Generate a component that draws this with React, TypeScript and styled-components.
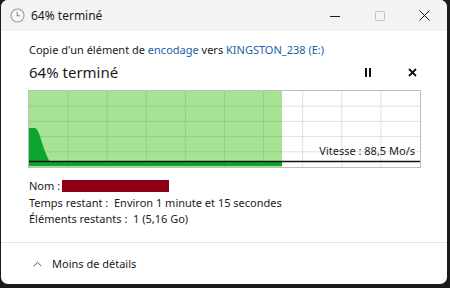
import React from "react";
import styled, { createGlobalStyle } from "styled-components";

const Global = createGlobalStyle`
  html, body { margin: 0; padding: 0; background: #1b1b1b; }
  body { width: 450px; height: 288px; overflow: hidden; font-family: "Segoe UI", "Noto Sans", "Open Sans", sans-serif; color: #000; }
`;

const Desktop = styled.div`
  width: 450px;
  height: 288px;
  background: #1b1b1b;
  display: flex;
  align-items: flex-start;
  padding-left: 1px;
  box-sizing: border-box;
`;

const Window = styled.div`
  width: 446px;
  height: 284px;
  background: #ffffff;
  border-radius: 7px;
  overflow: hidden;
  display: flex;
  flex-direction: column;
`;

const TitleBar = styled.div`
  height: 31px;
  background: #f3f3f3;
  display: flex;
  align-items: center;
  padding-left: 9px;
  flex-shrink: 0;
`;

const TitleText = styled.span`
  font-size: 12px;
  margin-left: 6px;
  flex: 1;
  color: #1a1a1a;
`;

const CaptionButton = styled.div<{ $disabled?: boolean }>`
  width: 45px;
  height: 31px;
  display: flex;
  align-items: center;
  justify-content: center;
  color: ${(p) => (p.$disabled ? "#c4c4c4" : "#1a1a1a")};
`;

const Body = styled.div`
  flex: 1;
  padding: 11px 23px 0 27px;
  display: flex;
  flex-direction: column;
`;

const Subtitle = styled.div`
  font-size: 11px;
  line-height: 16px;
  color: #1a1a1a;
  padding-left: 1px;
`;

const Link = styled.span`
  color: #1d5ea8;
`;

const HeadRow = styled.div`
  display: flex;
  align-items: center;
  height: 22px;
  margin-top: 3px;
  padding-left: 1px;
`;

const Heading = styled.div`
  font-size: 15px;
  flex: 1;
  color: #1a1a1a;
`;

const IconBtn = styled.div`
  width: 24px;
  height: 22px;
  display: flex;
  align-items: center;
  justify-content: center;
  margin-left: 20px;
`;

const Chart = styled.div`
  position: relative;
  margin-top: 7px;
  width: 391px;
  height: 76px;
  border: 1px solid #bdbdbd;
`;

const Speed = styled.div`
  position: absolute;
  right: 5px;
  bottom: 9px;
  font-size: 11px;
  line-height: 14px;
  color: #1a1a1a;
`;

const Details = styled.div`
  margin-top: 10px;
  padding-left: 1px;
  display: flex;
  flex-direction: column;
  font-size: 11px;
  line-height: 16.5px;
  color: #1a1a1a;
`;

const Line = styled.div`
  display: flex;
  align-items: center;
  white-space: pre;
`;

const Redacted = styled.span`
  display: inline-block;
  width: 107px;
  height: 12px;
  background: #8b0014;
  margin-left: 2px;
`;

const Footer = styled.div`
  height: 41px;
  border-top: 1px solid #e3e3e3;
  display: flex;
  align-items: center;
  padding-left: 32px;
  margin-top: auto;
  font-size: 11px;
  color: #1a1a1a;
  gap: 10px;
`;

const W = 391;
const H = 76;
const GREEN_W = 253;

function ChartDrawing() {
  const vs = Array.from({ length: 9 }, (_, i) => (i + 1) * (W / 10));
  const hs = Array.from({ length: 4 }, (_, i) => (i + 1) * (H / 5));
  return (
    <svg width={W} height={H} style={{ display: "block" }}>
      <rect x={0} y={0} width={W} height={H} fill="#fff" />
      {vs.map((x) => (
        <line key={"v" + x} x1={x} x2={x} y1={0} y2={H} stroke="#d9e6d9" strokeWidth={1} />
      ))}
      {hs.map((y) => (
        <line key={"h" + y} x1={0} x2={W} y1={y} y2={y} stroke="#d9e6d9" strokeWidth={1} />
      ))}
      <rect x={0} y={0} width={GREEN_W} height={H} fill="#a6e394" />
      {vs.filter((x) => x < GREEN_W).map((x) => (
        <line key={"gv" + x} x1={x} x2={x} y1={0} y2={H} stroke="#8fd27d" strokeWidth={1} />
      ))}
      {hs.map((y) => (
        <line key={"gh" + y} x1={0} x2={GREEN_W} y1={y} y2={y} stroke="#8fd27d" strokeWidth={1} />
      ))}
      <path d="M0,71 L0,37 L6,37 C11,38 13,58 21,71 Z" fill="#0ea52e" />
      <rect x={0} y={70} width={GREEN_W} height={5} fill="#0ea52e" />
      <line x1={0} x2={W} y1={70.5} y2={70.5} stroke="#111" strokeWidth={1.3} />
    </svg>
  );
}

export default function App() {
  return (
    <>
      <Global />
      <Desktop>
        <Window>
          <TitleBar>
            <svg width="15" height="15" viewBox="0 0 15 15">
              <circle cx="7.5" cy="7.5" r="6.5" fill="#f7f7f7" stroke="#9a9a9a" strokeWidth="1.1" />
              <path d="M7.2 3.8 V7.8 H10" fill="none" stroke="#8a8a8a" strokeWidth="1.1" />
            </svg>
            <TitleText>64% terminé</TitleText>
            <CaptionButton>
              <svg width="10" height="10" viewBox="0 0 10 10">
                <line x1="0" x2="10" y1="5.5" y2="5.5" stroke="currentColor" strokeWidth="1" />
              </svg>
            </CaptionButton>
            <CaptionButton $disabled>
              <svg width="10" height="10" viewBox="0 0 10 10">
                <rect x="0.5" y="0.5" width="9" height="9" rx="1" fill="none" stroke="currentColor" strokeWidth="1" />
              </svg>
            </CaptionButton>
            <CaptionButton>
              <svg width="11" height="11" viewBox="0 0 11 11">
                <path d="M0.5 0.5 L10.5 10.5 M10.5 0.5 L0.5 10.5" stroke="currentColor" strokeWidth="1" />
              </svg>
            </CaptionButton>
          </TitleBar>
          <Body>
            <Subtitle>
              Copie d'un élément de <Link>encodage</Link> vers <Link>KINGSTON_238 (E:)</Link>
            </Subtitle>
            <HeadRow>
              <Heading>64% terminé</Heading>
              <IconBtn>
                <svg width="8" height="9" viewBox="0 0 8 9">
                  <rect x="1" y="0" width="2" height="9" fill="#111" />
                  <rect x="5" y="0" width="2" height="9" fill="#111" />
                </svg>
              </IconBtn>
              <IconBtn>
                <svg width="9" height="9" viewBox="0 0 9 9">
                  <path d="M1 1 L8 8 M8 1 L1 8" stroke="#111" strokeWidth="1.8" />
                </svg>
              </IconBtn>
            </HeadRow>
            <Chart>
              <ChartDrawing />
              <Speed>Vitesse : 88,5 Mo/s</Speed>
            </Chart>
            <Details>
              <Line>
                Nom :<Redacted />
              </Line>
              <Line>Temps restant :  Environ 1 minute et 15 secondes</Line>
              <Line>Éléments restants :  1 (5,16 Go)</Line>
            </Details>
          </Body>
          <Footer>
            <svg width="9" height="6" viewBox="0 0 9 6">
              <path d="M0.6 5.2 L4.5 1.3 L8.4 5.2" fill="none" stroke="#555" strokeWidth="1" />
            </svg>
            <span>Moins de détails</span>
          </Footer>
        </Window>
      </Desktop>
    </>
  );
}
